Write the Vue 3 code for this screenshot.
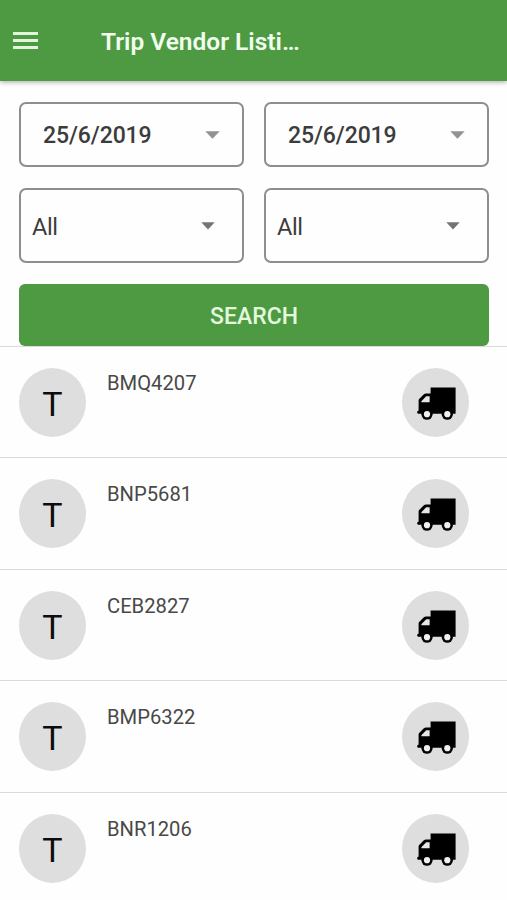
<template>
  <div class="page">
    <header class="toolbar">
      <button class="menu-btn" aria-label="Menu">
        <span></span>
        <span></span>
        <span></span>
      </button>
      <h1 class="toolbar-title">Trip Vendor Listi…</h1>
    </header>

    <section class="filters">
      <button v-for="(date, i) in dates" :key="'date' + i" class="field date-field">
        <span>{{ date }}</span>
        <svg class="caret" width="15" height="8" viewBox="0 0 15 8">
          <path d="M0.3 0.2h14.4L7.5 7.8z" fill="#929292" />
        </svg>
      </button>
      <button v-for="(option, i) in options" :key="'option' + i" class="field select-field">
        <span>{{ option }}</span>
        <svg class="caret" width="14" height="8" viewBox="0 0 14 8">
          <path d="M0.3 0.3h13.4L7 7.6z" fill="#747474" />
        </svg>
      </button>
      <button class="search-btn">SEARCH</button>
    </section>

    <ul class="vendor-list">
      <li v-for="trip in trips" :key="trip" class="vendor-item">
        <div class="avatar">T</div>
        <span class="plate">{{ trip }}</span>
        <div class="avatar truck">
          <svg width="40" height="34" viewBox="0 0 40 34">
            <path d="M14.6 .5h25v26.2H2.1L1.2 26v-1.4l1.4-1.2V13.6Q2.6 12.6 3.4 11.8L7.6 7.6Q8.7 6.4 10.2 6.4h4.4z" />
            <path d="M5.4 15.3v-1.1L10.2 9.2h3.4v6.1z" fill="#e6e6e6" />
            <circle cx="11" cy="27.2" r="5.6" />
            <circle cx="31.3" cy="27.2" r="5.6" />
            <circle cx="11" cy="27.2" r="3.1" fill="#f0f0f0" />
            <circle cx="31.3" cy="27.2" r="3.1" fill="#f0f0f0" />
          </svg>
        </div>
      </li>
    </ul>
  </div>
</template>

<script setup>
const dates = ['25/6/2019', '25/6/2019']
const options = ['All', 'All']
const trips = ['BMQ4207', 'BNP5681', 'CEB2827', 'BMP6322', 'BNR1206']
</script>

<style>
body {
  margin: 0;
  background: #fefefe;
}
</style>

<style scoped>
.page {
  height: 900px;
  overflow: hidden;
  background: #fefefe;
  font-family: Roboto, 'Liberation Sans', sans-serif;
}

button {
  font-family: inherit;
  margin: 0;
}

.toolbar {
  display: flex;
  align-items: center;
  height: 81px;
  padding: 0 13px;
  box-sizing: border-box;
  background: #4d9a42;
  box-shadow: 0 1px 5px rgba(0, 0, 0, 0.35);
}

.menu-btn {
  display: flex;
  flex-direction: column;
  gap: 4px;
  width: 25px;
  padding: 0;
  border: 0;
  background: none;
}

.menu-btn span {
  height: 3px;
  background: #e2f5dc;
}

.toolbar-title {
  margin: 2px 0 0 63px;
  font-size: 24.5px;
  line-height: 30px;
  font-weight: 600;
  color: #f2fdee;
  white-space: nowrap;
}

.filters {
  display: grid;
  grid-template-columns: 1fr 1fr;
  grid-template-rows: 65px 75px 62px;
  gap: 21px 20px;
  padding: 21px 18px 0 19px;
}

.field {
  display: flex;
  align-items: center;
  justify-content: space-between;
  border: 2px solid #8e8e8e;
  border-radius: 7px;
  background: #fefefe;
  color: #3c3c3c;
  text-align: left;
}

.date-field {
  padding: 2px 22px 0 22px;
  font-size: 23px;
  font-weight: 500;
  letter-spacing: -0.1px;
}

.date-field .caret {
  margin-top: -2px;
}

.select-field {
  padding: 2px 27px 0 11px;
  font-size: 23.5px;
  letter-spacing: -0.4px;
}

.select-field .caret {
  margin-top: -1px;
}

.caret {
  display: block;
}

.search-btn {
  grid-column: 1 / -1;
  padding: 2px 0 0;
  border: 0;
  border-radius: 6px;
  background: #4d9a42;
  color: #e3f8dc;
  font-size: 23px;
  font-weight: 500;
}

.vendor-list {
  margin: 0;
  padding: 0;
  list-style: none;
}

.vendor-item {
  display: flex;
  height: 111.4px;
  padding: 21px 38px 0 19px;
  box-sizing: border-box;
  border-top: 1px solid #dadada;
}

.avatar {
  display: flex;
  align-items: center;
  justify-content: center;
  flex: none;
  width: 67px;
  height: 69px;
  padding-top: 3px;
  box-sizing: border-box;
  border-radius: 50%;
  background: #dedede;
  color: #0c0c0c;
  font-size: 34px;
}

.plate {
  flex: 1;
  margin: 3px 0 0 21px;
  font-size: 20.2px;
  line-height: 24px;
  color: #484848;
}
</style>
